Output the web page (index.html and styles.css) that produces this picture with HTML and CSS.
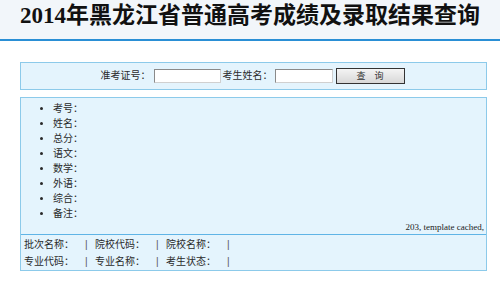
FILE: index.html
```html
<!DOCTYPE html>
<html lang="zh-CN">

<head>
  <meta charset="UTF-8">
  <title>2014年黑龙江省普通高考成绩及录取结果查询</title>
  <link rel="stylesheet" href="styles.css">
</head>

<body>
  <header class="top">
    <h1>2014年黑龙江省普通高考成绩及录取结果查询</h1>
  </header>

  <main class="wrap">
    <form class="search">
      <label for="ksh">准考证号：</label>
      <input type="text" id="ksh" name="ksh" class="field field-id">
      <label for="xm">考生姓名：</label>
      <input type="text" id="xm" name="xm" class="field field-name">
      <button type="button" class="btn">查　询</button>
    </form>

    <section class="result">
      <ul class="scores">
        <li>考号：</li>
        <li>姓名：</li>
        <li>总分：</li>
        <li>语文：</li>
        <li>数学：</li>
        <li>外语：</li>
        <li>综合：</li>
        <li>备注：</li>
      </ul>
      <p class="cache">203, template cached,</p>
      <div class="admit">
        <div class="row">
          <span class="cell">批次名称：</span><span class="sep">|</span>
          <span class="cell">院校代码：</span><span class="sep">|</span>
          <span class="cell">院校名称：</span><span class="sep">|</span>
        </div>
        <div class="row">
          <span class="cell">专业代码：</span><span class="sep">|</span>
          <span class="cell">专业名称：</span><span class="sep">|</span>
          <span class="cell">考生状态：</span><span class="sep">|</span>
        </div>
      </div>
    </section>
  </main>
</body>

</html>
```

FILE: styles.css
```css
body {
  margin: 0;
  background: #fff;
  color: #2a2a2a;
  font-family: "Liberation Sans", "Noto Sans CJK SC", sans-serif;
  font-size: 10px;
}

.top {
  height: 39px;
  background: #f2f6fa;
  border-bottom: 2px solid #2a8fd5;
}

h1 {
  margin: 0;
  font-family: "Liberation Serif", "Noto Sans CJK SC", serif;
  font-size: 23px;
  font-weight: 700;
  line-height: 30px;
  padding-top: 1px;
  text-align: center;
  color: #111;
}

.wrap {
  margin: 21px 0 0 20px;
  width: 467px;
}

.search {
  box-sizing: border-box;
  height: 28px;
  margin: 0;
  background: #e4f4fd;
  border: 1px solid #8ccaea;
  display: flex;
  align-items: center;
  justify-content: center;
  padding-right: 2px;
}

.search label {
  line-height: 14px;
}

.field {
  box-sizing: border-box;
  height: 14px;
  margin: 0 2px 0 3px;
  padding: 0;
  border: 1px solid #8a8a8a;
  border-right-color: #d0d0d0;
  border-bottom-color: #d0d0d0;
  background: #fff;
}

.field-id {
  width: 67px;
}

.field-name {
  width: 58px;
  margin-left: 2px;
}

.btn {
  box-sizing: border-box;
  width: 69px;
  height: 16px;
  margin-left: 1px;
  padding: 0;
  border: 1px solid #333;
  background: linear-gradient(#f4f4f4, #d8d8d8);
  font-family: inherit;
  font-size: 9px;
  line-height: 14px;
  color: #333;
}

.result {
  margin-top: 7px;
  box-sizing: border-box;
  background: #e4f4fd;
  border: 1px solid #8ccaea;
}

.scores {
  margin: 0;
  padding: 3px 0 0 32px;
  list-style: disc outside;
}

.scores li {
  line-height: 15px;
}

.cache {
  margin: 0;
  padding-right: 2px;
  text-align: right;
  font-family: "Liberation Serif", serif;
  font-size: 9px;
  line-height: 13px;
  color: #222;
}

.admit {
  border-top: 1px solid #5fb4e6;
  padding: 1px 0 0 3px;
}

.row {
  display: flex;
  line-height: 17px;
}

.cell {
  width: 60px;
}

.sep {
  width: 11px;
  padding-left: 1px;
  box-sizing: border-box;
  color: #555;
}
```
